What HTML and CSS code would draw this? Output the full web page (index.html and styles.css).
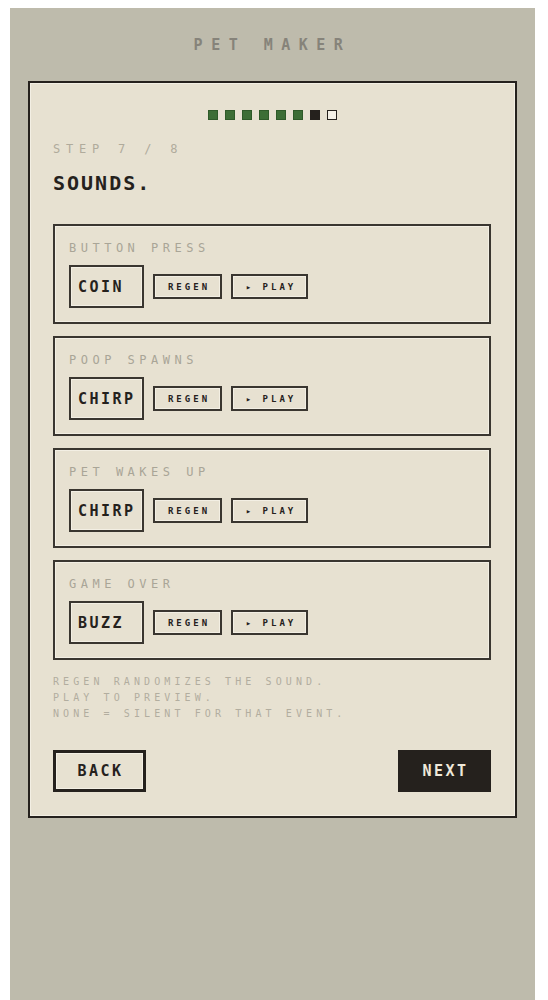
FILE: index.html
```html
<!DOCTYPE html>
<html lang="en">
<head>
    <meta charset="UTF-8">
    <meta name="viewport" content="width=device-width, initial-scale=1.0">
    <title>Pet Maker</title>
    <link rel="stylesheet" href="styles.css">
</head>
<body>

    <div class="screen">
        <h1 class="title">PET MAKER</h1>

        <div class="card">
            <div class="progress">
                <span class="dot done"></span>
                <span class="dot done"></span>
                <span class="dot done"></span>
                <span class="dot done"></span>
                <span class="dot done"></span>
                <span class="dot done"></span>
                <span class="dot current"></span>
                <span class="dot"></span>
            </div>

            <div class="step">STEP 7 / 8</div>
            <h2 class="heading">SOUNDS.</h2>

            <div class="sounds">
                <div class="sound">
                    <div class="label">BUTTON PRESS</div>
                    <div class="row">
                        <div class="value">COIN</div>
                        <button class="small">REGEN</button>
                        <button class="small play">&#9656; PLAY</button>
                    </div>
                </div>
                <div class="sound">
                    <div class="label">POOP SPAWNS</div>
                    <div class="row">
                        <div class="value">CHIRP</div>
                        <button class="small">REGEN</button>
                        <button class="small play">&#9656; PLAY</button>
                    </div>
                </div>
                <div class="sound">
                    <div class="label">PET WAKES UP</div>
                    <div class="row">
                        <div class="value">CHIRP</div>
                        <button class="small">REGEN</button>
                        <button class="small play">&#9656; PLAY</button>
                    </div>
                </div>
                <div class="sound">
                    <div class="label">GAME OVER</div>
                    <div class="row">
                        <div class="value">BUZZ</div>
                        <button class="small">REGEN</button>
                        <button class="small play">&#9656; PLAY</button>
                    </div>
                </div>
            </div>

            <p class="hint">
                REGEN RANDOMIZES THE SOUND.<br>
                PLAY TO PREVIEW.<br>
                NONE = SILENT FOR THAT EVENT.
            </p>

            <div class="nav">
                <button class="big">BACK</button>
                <button class="big primary">NEXT</button>
            </div>
        </div>
    </div>

</body>
</html>
```

FILE: styles.css
```css
/* Page */
body {
    margin: 8px 0 0 10px;
    background: #fff;
    font-family: "DejaVu Sans Mono", monospace;
}

.screen {
    width: 525px;
    min-height: 992px;
    background: #bebbac;
    padding: 28px 0 0;
    box-sizing: border-box;
}

.title {
    margin: 0 0 27px;
    text-align: center;
    font-size: 15px;
    line-height: 18px;
    font-weight: bold;
    letter-spacing: 8.5px;
    color: #86837a;
}

/* Card */
.card {
    margin: 0 18px;
    background: #e7e1d1;
    border: 2px solid #25211d;
    box-shadow: inset 0 0 0 1px #f3efe4;
    padding: 27px 24px 24px 23px;
}

.progress {
    display: flex;
    justify-content: center;
    gap: 7px;
}

.dot {
    width: 8px;
    height: 8px;
    border: 1px solid #25211d;
    background: #f4f0e6;
}

.dot.done {
    background: #3d6e36;
    border-color: #2f5a29;
}

.dot.current {
    background: #25211d;
}

.step {
    margin-top: 22px;
    font-size: 12px;
    letter-spacing: 5.8px;
    color: #b0ab9c;
}

.heading {
    margin: 15px 0 0;
    font-size: 20px;
    font-weight: bold;
    color: #25211d;
    letter-spacing: 2px;
}

/* Sound rows */
.sounds {
    margin-top: 29px;
    display: flex;
    flex-direction: column;
    gap: 12px;
}

.sound {
    height: 100px;
    box-sizing: border-box;
    border: 2px solid #3a3630;
    box-shadow: inset 0 0 0 1px #f3efe4;
    padding: 15px 14px 0 14px;
}

.label {
    font-size: 12px;
    letter-spacing: 4.5px;
    color: #a9a597;
    line-height: 14px;
}

.row {
    display: flex;
    align-items: center;
    gap: 9px;
    margin-top: 10px;
}

.value {
    width: 75px;
    height: 43px;
    box-sizing: border-box;
    border: 2px solid #3a3630;
    box-shadow: inset 0 0 0 1px #f3efe4;
    display: flex;
    align-items: center;
    padding-left: 7px;
    font-size: 15px;
    font-weight: bold;
    letter-spacing: 2.5px;
    color: #25211d;
}

button {
    font-family: "DejaVu Sans Mono", monospace;
    cursor: pointer;
}

.small {
    width: 69px;
    height: 25px;
    padding: 0 0 0 3px;
    border: 2px solid #3a3630;
    box-shadow: inset 0 0 0 1px #f3efe4;
    background: #e7e1d1;
    color: #25211d;
    font-size: 9px;
    font-weight: bold;
    letter-spacing: 3px;
}

.small.play {
    width: 77px;
}

/* Footer */
.hint {
    margin: 14px 0 0;
    font-size: 10px;
    line-height: 16px;
    letter-spacing: 4.1px;
    color: #b2ad9f;
}

.nav {
    margin-top: 28px;
    display: flex;
    justify-content: space-between;
}

.big {
    width: 93px;
    height: 42px;
    padding: 0 0 0 2px;
    border: 3px solid #25211d;
    box-shadow: inset 0 0 0 1px #f3efe4;
    background: #e7e1d1;
    color: #25211d;
    font-size: 15px;
    font-weight: bold;
    letter-spacing: 2.5px;
}

.big.primary {
    background: #25211d;
    color: #efe9d9;
    box-shadow: none;
}
```
